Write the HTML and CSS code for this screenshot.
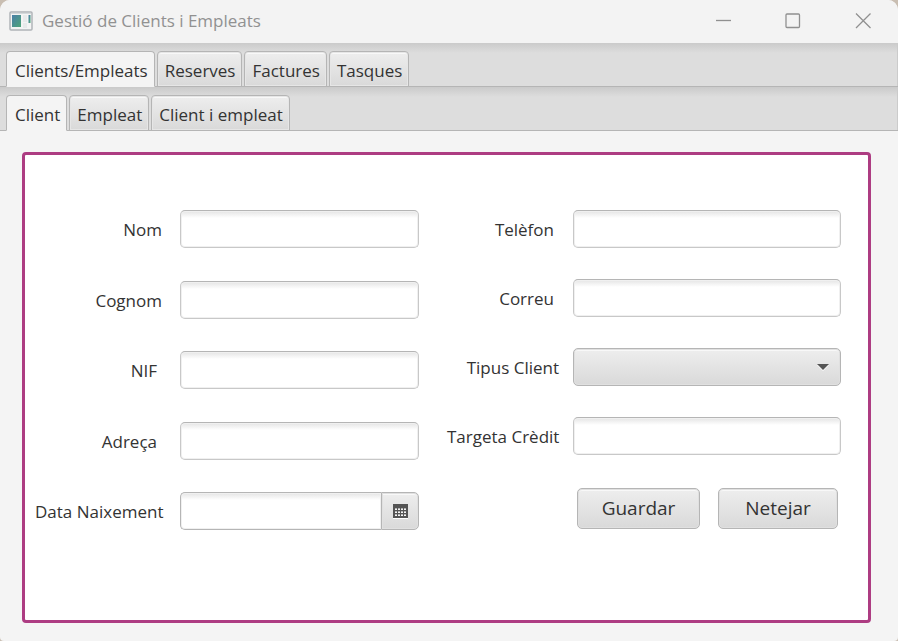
FILE: index.html
```html
<!DOCTYPE html>
<html lang="ca">
<head>
<meta charset="utf-8">
<meta name="viewport" content="width=device-width, initial-scale=1">
<title>Gestió de Clients i Empleats</title>
<link rel="stylesheet" href="styles.css">
</head>
<body>
<div class="window">
  <header class="titlebar">
    <svg class="app-icon" viewBox="0 0 24 20" aria-hidden="true">
      <defs>
        <linearGradient id="pane" x1="0" y1="0" x2="1" y2="1">
          <stop offset="0" stop-color="#4a7fa8"/>
          <stop offset="1" stop-color="#4fa579"/>
        </linearGradient>
      </defs>
      <rect x="1" y="1" width="22" height="18" rx="1" fill="#f4f4f4" stroke="#b0b4b8" stroke-width="1.5"/>
      <path d="M2 2.5h20" stroke="#d5d9dc"/>
      <rect x="3" y="4" width="9" height="12" fill="url(#pane)"/>
      <rect x="14" y="4" width="4" height="7" fill="#e8eaeb"/>
      <rect x="14" y="12" width="4" height="5" fill="#e8eaeb"/>
      <rect x="19.500" y="4" width="2" height="8" fill="url(#pane)"/>
    </svg>
    <h1 class="title">Gestió de Clients i Empleats</h1>
    <div class="window-buttons">
      <button class="window-button" type="button" aria-label="Minimitza">
        <svg viewBox="0 0 16 16" aria-hidden="true"><path d="M1 7.500h15"/></svg>
      </button>
      <button class="window-button" type="button" aria-label="Maximitza">
        <svg viewBox="0 0 16 16" aria-hidden="true"><rect x="1" y="1" width="13.500" height="13.500" rx="1"/></svg>
      </button>
      <button class="window-button" type="button" aria-label="Tanca">
        <svg viewBox="0 0 16 16" aria-hidden="true"><path d="M1 0.500l14.500 14.500M15.500 0.500L1 15"/></svg>
      </button>
    </div>
  </header>

  <nav class="tabs" role="tablist" aria-label="Seccions">
    <button class="tab tab-active" type="button" role="tab" aria-selected="true">Clients/Empleats</button>
    <button class="tab" type="button" role="tab" aria-selected="false">Reserves</button>
    <button class="tab" type="button" role="tab" aria-selected="false">Factures</button>
    <button class="tab" type="button" role="tab" aria-selected="false">Tasques</button>
  </nav>
  <nav class="tabs" role="tablist" aria-label="Tipus">
    <button class="tab tab-active" type="button" role="tab" aria-selected="true">Client</button>
    <button class="tab" type="button" role="tab" aria-selected="false">Empleat</button>
    <button class="tab" type="button" role="tab" aria-selected="false">Client i empleat</button>
  </nav>

  <main class="content">
    <form class="panel">
      <div class="fields fields-person">
        <div class="field"><label for="nom">Nom</label><input class="box" id="nom" type="text"></div>
        <div class="field"><label for="cognom">Cognom</label><input class="box" id="cognom" type="text"></div>
        <div class="field field-inset"><label for="nif">NIF</label><input class="box" id="nif" type="text"></div>
        <div class="field field-inset"><label for="adreca">Adreça</label><input class="box" id="adreca" type="text"></div>
        <div class="field">
          <label for="naixement">Data Naixement</label>
          <div class="date">
            <input class="box date-box" id="naixement" type="text">
            <button class="date-button" type="button" aria-label="Obre el calendari">
              <svg viewBox="0 0 15 15" aria-hidden="true">
                <path d="M0 0h15v14H0z" fill="#555"/>
                <path d="M0 14.500h15" stroke="#fff"/>
                <g fill="#f4f4f4">
                  <path d="M2 5h2v1H2zM5 5h2v1H5zM8 5h2v1H8zM11 5h2v1h-2z"/>
                  <path d="M2 8h2v1H2zM5 8h2v1H5zM8 8h2v1H8zM11 8h2v1h-2z"/>
                  <path d="M2 11h2v1H2zM5 11h2v1H5zM8 11h2v1H8zM11 11h2v1h-2z"/>
                </g>
                <g fill="#b5b5b5">
                  <path d="M2 4h2v1H2zM5 4h2v1H5zM8 4h2v1H8zM11 4h2v1h-2z"/>
                  <path d="M2 7h2v1H2zM5 7h2v1H5zM8 7h2v1H8zM11 7h2v1h-2z"/>
                  <path d="M2 10h2v1H2zM5 10h2v1H5zM8 10h2v1H8zM11 10h2v1h-2z"/>
                </g>
              </svg>
            </button>
          </div>
        </div>
      </div>

      <div class="fields fields-contact">
        <div class="field field-inset"><label for="telefon">Telèfon</label><input class="box" id="telefon" type="tel"></div>
        <div class="field field-inset"><label for="correu">Correu</label><input class="box" id="correu" type="email"></div>
        <div class="field">
          <label for="tipus">Tipus Client</label>
          <div class="combo">
            <select class="select" id="tipus"><option value=""></option></select>
            <svg class="combo-arrow" viewBox="0 0 12 7" aria-hidden="true">
              <path d="M0 1h12L6 7z" fill="#fff"/>
              <path d="M0 0h12L6 6z" fill="#555"/>
            </svg>
          </div>
        </div>
        <div class="field"><label for="targeta">Targeta Crèdit</label><input class="box" id="targeta" type="text"></div>
        <div class="actions">
          <button class="button" type="button">Guardar</button>
          <button class="button" type="button">Netejar</button>
        </div>
      </div>
    </form>
  </main>
</div>
</body>
</html>
```
FILE: styles.css
```css
* {
  box-sizing: border-box;
}

body {
  margin: 0;
  background: #c9beb2;
  color: #333;
  font-family: "Open Sans", "Noto Sans", sans-serif;
  font-size: 17px;
  line-height: 24px;
}

button,
input,
select {
  margin: 0;
  padding: 0;
  color: inherit;
  font: inherit;
}

.window {
  display: flex;
  flex-direction: column;
  min-height: 100vh;
  overflow: hidden;
  border-radius: 10px 10px 4px 4px;
  background: #f4f4f4;
}

.titlebar {
  display: flex;
  align-items: center;
  height: 43px;
  padding: 0 0 2px 9px;
  background: #f3f3f3;
}

.app-icon {
  width: 24px;
  height: 20px;
}

.title {
  margin: 0 auto 0 9px;
  color: #919191;
  font-size: 17px;
  font-weight: 400;
}

.window-buttons {
  display: flex;
}

.window-button {
  display: grid;
  place-items: center;
  width: 70px;
  height: 41px;
  border: 0;
  background: none;
}

.window-button svg {
  width: 16px;
  height: 16px;
  fill: none;
  stroke: #909090;
  stroke-width: 1.3;
}

.tabs {
  display: flex;
  align-items: flex-end;
  gap: 2px;
  height: 44px;
  padding-left: 6px;
  background: linear-gradient(#cacaca, #ddd 10px);
  box-shadow: inset 0 -1px #b5b5b5, inset -1px 0 #cbcbcb;
}

.tab {
  height: 36px;
  padding: 3px 6px 0 7px;
  border: 1px solid #b5b5b5;
  border-radius: 4px 4px 0 0;
  background: linear-gradient(#eee, #d9d9d9);
  box-shadow: inset 0 0 0 1px #e6e6e6, inset 0 2px #f8f8f8;
  white-space: nowrap;
}

.tab-active {
  padding-left: 8px;
  border-bottom-color: #f4f4f4;
  background: #f4f4f4;
  box-shadow: none;
}

.content {
  display: flex;
  flex: 1;
  padding: 21px 27px 18px 22px;
}

.panel {
  display: grid;
  flex: 1;
  grid-template-columns: 384fr 394fr;
  align-items: start;
  gap: 28px;
  padding: 55px 27px 55px 10px;
  border: 3px solid #ad3c82;
  border-radius: 4px;
  background: #fff;
}

.fields {
  display: flex;
  flex-direction: column;
  min-width: 0;
}

.fields-person {
  justify-content: space-between;
  height: 320px;
}

.fields-contact {
  gap: 31px;
}

.field {
  display: grid;
  grid-template-columns: 127px minmax(0, 1fr);
  align-items: center;
  gap: 18px;
}

.fields-contact .field {
  grid-template-columns: 112px minmax(0, 1fr);
  gap: 14px;
}

.field label {
  padding-top: 2px;
  text-align: right;
  white-space: nowrap;
}

.field-inset label {
  padding-right: 5px;
}

.box,
.select {
  width: 100%;
  height: 38px;
  border: 1px solid #b5b5b5;
  border-radius: 5px;
  outline: 0;
}

.box {
  padding: 0 10px;
  border-color: #b5b5b5 #c8c8c8 #c8c8c8;
  background: linear-gradient(#e4e4e4, #fff 7px);
  box-shadow: inset 0 0 0 1px #f0f0f0;
}

.date {
  display: flex;
}

.date-box {
  flex: 1;
  min-width: 0;
  border-color: #b5b5b5;
  border-right: 0;
  border-radius: 5px 0 0 5px;
}

.date-button,
.select,
.button {
  border: 1px solid #b5b5b5;
  background: linear-gradient(#eee, #d9d9d9);
  box-shadow: inset 0 0 0 1px #e0e0e0, inset 0 2px #f8f8f8;
}

.date-button {
  display: grid;
  place-items: center;
  width: 38px;
  height: 38px;
  border-radius: 0 5px 5px 0;
}

.date-button svg {
  width: 15px;
  height: 15px;
}

.combo {
  position: relative;
}

.select {
  display: block;
  padding: 0 34px 0 10px;
  appearance: none;
}

.combo-arrow {
  position: absolute;
  top: 16px;
  right: 12px;
  width: 12px;
  height: 7px;
  pointer-events: none;
}

.actions {
  display: grid;
  grid-template-columns: 123px 120px;
  justify-content: end;
  gap: 18px;
  padding: 2px 3px 0 0;
}

.button {
  height: 41px;
  padding-bottom: 2px;
  border-radius: 5px;
  font-size: 19px;
}
```
